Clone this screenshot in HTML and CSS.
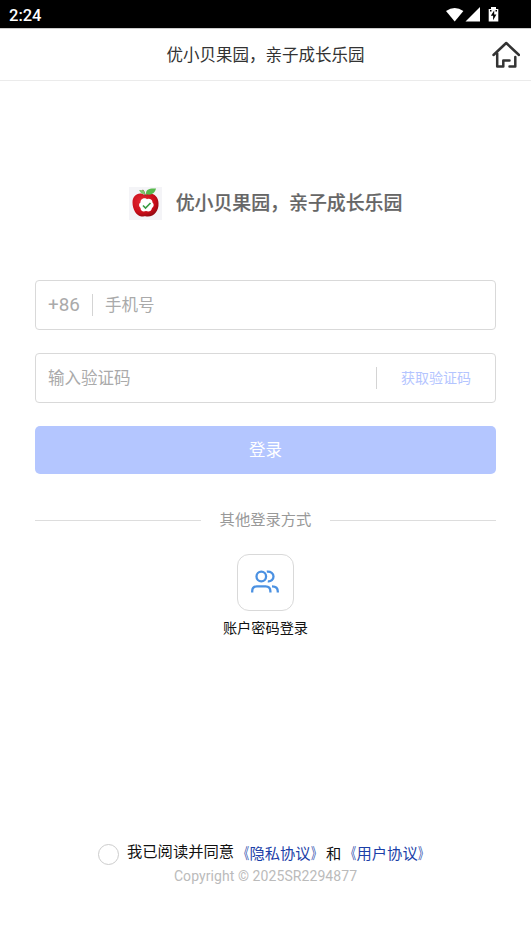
FILE: index.html
```html
<!DOCTYPE html>
<html lang="zh-CN">
<head>
<meta charset="utf-8">
<title>优小贝果园，亲子成长乐园</title>
<link rel="stylesheet" href="styles.css">
</head>
<body>
<div class="status">
  <span class="time">2:24</span>
  <svg class="status-icons" width="56" height="18" viewBox="0 0 56 18" fill="#fff">
    <path d="M0 5Q8.700-1.200 17.400 5L8.700 15.500Z"/>
    <path d="M34 1V15.500H19.500Z"/>
    <path d="M45 1h5v2h2.300v12.500h-9.600V3H45z"/>
    <path d="M48.200 4.500 44.800 9.700h2.300v4.500l3.300-5.600h-2.200z" fill="#000"/>
    <path d="M44 4h1.500v1.500H44zM49.500 4H51v1.500h-1.500z" fill="#000"/>
  </svg>
</div>
<header class="nav">
  <h1>优小贝果园，亲子成长乐园</h1>
  <svg class="home" width="28" height="28" viewBox="0 0 28 28" fill="none" stroke="#333" stroke-width="2.500" stroke-linecap="round" stroke-linejoin="round">
    <path d="M1.500 14 14.200 2 27 14"/>
    <path d="M5.200 12.500V25.500H11.300V19.500H17.500"/>
    <path d="M23.300 16V25.500H17.500"/>
  </svg>
</header>
<main>
  <div class="brand">
    <svg class="logo" width="33" height="33" viewBox="0 0 33 33">
      <defs><radialGradient id="apple" cx=".38" cy=".35" r=".75"><stop offset="0" stop-color="#e52c35"/><stop offset=".65" stop-color="#c90d19"/><stop offset="1" stop-color="#850710"/></radialGradient></defs>
      <path fill="#f4f4f7" d="M0 0h33v33H0z"/>
      <path fill="url(#apple)" d="M16 8C10 4 3.500 8 3.500 15.500c0 7 4 13.500 9 14 2 .2 2-.6 4-.3 8 1.500 13.500-5 13-13C29.500 8 22 4 16 8Z"/>
      <path d="M16.500 9C16 6 15 4.500 13.500 3" fill="none" stroke="#765029" stroke-width="1.200"/>
      <path fill="#58b94d" d="M17 7C16.500 2 21 1 27 1.500 26 6 22 9 17 7Z"/>
      <path fill="#80c66d" d="M16 7C12 7.500 11.500 5 10 3 14 2.500 16 4 16 7Z"/>
      <path fill="#fff" d="M12.500 12.500c2-2 4.500-1.500 5.500-.3 2.500-1 5.500.3 5.500 3.300 2 2 1.200 4.500-.5 5.500-.5 3.500-3.500 4-6 3-3 1-5.500 0-5.500-3-2-2-2-4.500 0-5.500 0-1 0-2 1-3Z"/>
      <path d="m14 18.500 2.500 2.500 5-5" fill="none" stroke="#389c42" stroke-width="1.600"/>
    </svg>
    <strong>优小贝果园，亲子成长乐园</strong>
  </div>
  <div class="field phone"><span class="code">+86</span><span class="bar"></span><span class="hint">手机号</span></div>
  <div class="field verify"><span class="hint">输入验证码</span><span class="bar"></span><span class="get">获取验证码</span></div>
  <div class="submit">登录</div>
  <div class="divider"><span>其他登录方式</span></div>
  <div class="account">
    <div class="tile">
      <svg width="28" height="24" viewBox="0 0 28 24" fill="none" stroke="#4b91e2" stroke-width="2.300">
        <circle cx="10.300" cy="6.500" r="4.800"/>
        <path d="M15.800 1.700C20 1.300 22.500 3.500 22.500 6.500s-2.500 5.200-5.700 4.800M1.200 22.500v-1.200c0-3 1.800-5 4.800-5h8.600c3 0 4.800 2 4.800 5v1.200M21 16.300c3.500 0 5.800 2 5.800 5.200v1"/>
      </svg>
    </div>
    <span>账户密码登录</span>
  </div>
</main>
<footer>
  <div class="agree"><span class="radio"></span><span class="read">我已阅读并同意</span><span class="terms"><a><i class="open">《</i>隐私协议<i class="close">》</i></a>和<a><i class="open">《</i>用户协议<i class="close">》</i></a></span></div>
  <div class="copyright">Copyright © 2025SR2294877</div>
</footer>
</body>
</html>
```

FILE: styles.css
```css
* { box-sizing: border-box; }
body {
  margin: 0;
  height: 945px;
  display: flex;
  flex-direction: column;
  overflow: hidden;
  background: #fff;
  color: #333;
  font-family: Roboto, "Noto Sans CJK SC", sans-serif;
  white-space: nowrap;
}
svg { display: block; flex: none; }
.status {
  height: 28px;
  flex: none;
  display: flex;
  justify-content: space-between;
  padding: 5px 29px 0 9px;
  background: #000;
  color: #fff;
}
.status-icons { margin-top: 1px; }
.time { font-size: 16.500px; font-weight: 500; line-height: 21px; }
.nav {
  height: 53px;
  flex: none;
  display: grid;
  grid-template-columns: 1fr auto 1fr;
  align-items: center;
  padding-right: 11px;
  padding-left: 11px;
  border-top: 1px solid #ccc;
  border-bottom: 1px solid #ebebeb;
}
.nav h1 { grid-column: 2; margin: 0; padding-top: 2px; font-size: 16.500px; font-weight: 400; line-height: 24px; }
.home { justify-self: end; }
main { padding: 105px 35px 0; }
.brand {
  height: 34px;
  display: flex;
  align-items: center;
  justify-content: center;
  gap: 14px;
  margin-bottom: 60px;
}
.brand strong { padding-top: 2px; font-size: 18.900px; line-height: 28px; font-weight: 500; color: #666; -webkit-text-stroke: .2px #666; }
.field {
  height: 50px;
  display: flex;
  align-items: center;
  padding: 0 12px;
  border: 1px solid #d9d9d9;
  border-radius: 4px;
  color: #aaa;
  font-size: 16.500px;
}
.hint, .get { padding-bottom: 2px; }
.code { width: 44px; font-size: 18.800px; }
.bar { width: 1px; height: 22px; background: #d4d4d4; }
.phone .bar { margin-right: 12px; }
.verify { margin-top: 23px; }
.verify .bar { margin-left: auto; }
.get { width: 118px; margin-right: -12px; text-align: center; font-size: 14px; color: #b4c5ff; }
.submit {
  height: 48px;
  margin-top: 23px;
  border-radius: 5px;
  background: #b4c6ff;
  color: #fff;
  font-size: 16.500px;
  line-height: 49px;
  text-align: center;
}
.divider {
  height: 24px;
  margin-top: 34px;
  display: flex;
  align-items: center;
  gap: 19px;
  color: #999;
  font-size: 15.300px;
}
.divider span { padding-bottom: 4px; }
.divider::before, .divider::after { content: ""; flex: 1; height: 1px; background: #ddd; }
.account { margin-top: 22px; display: flex; flex-direction: column; align-items: center; gap: 7px; color: #111; font-size: 14.200px; line-height: 20px; }
.tile {
  width: 57px;
  height: 57px;
  display: flex;
  align-items: center;
  justify-content: center;
  padding: 0 1px 1px 0;
  border: 1px solid #d9d9d9;
  border-radius: 12px;
}
footer { margin-top: auto; padding-bottom: 58px; }
.agree { display: flex; align-items: center; height: 24px; padding-left: 98px; font-size: 15.300px; line-height: 22px; color: #111; }
.radio { width: 21px; height: 21px; margin-right: 8px; border: 1px solid #ccc; border-radius: 50%; }
.read { margin-bottom: 4px; }
.agree a { color: #1c3fa8; }
.agree i { display: inline-block; width: 15.300px; font-style: normal; }
.open { transform: scaleX(.68); transform-origin: 98% 50%; }
.close { transform: scaleX(.68); transform-origin: 2% 50%; }
.copyright { height: 20px; text-align: center; color: #bbb; font-size: 14px; line-height: 20px; letter-spacing: .08px; margin-bottom: 1px; }
```
